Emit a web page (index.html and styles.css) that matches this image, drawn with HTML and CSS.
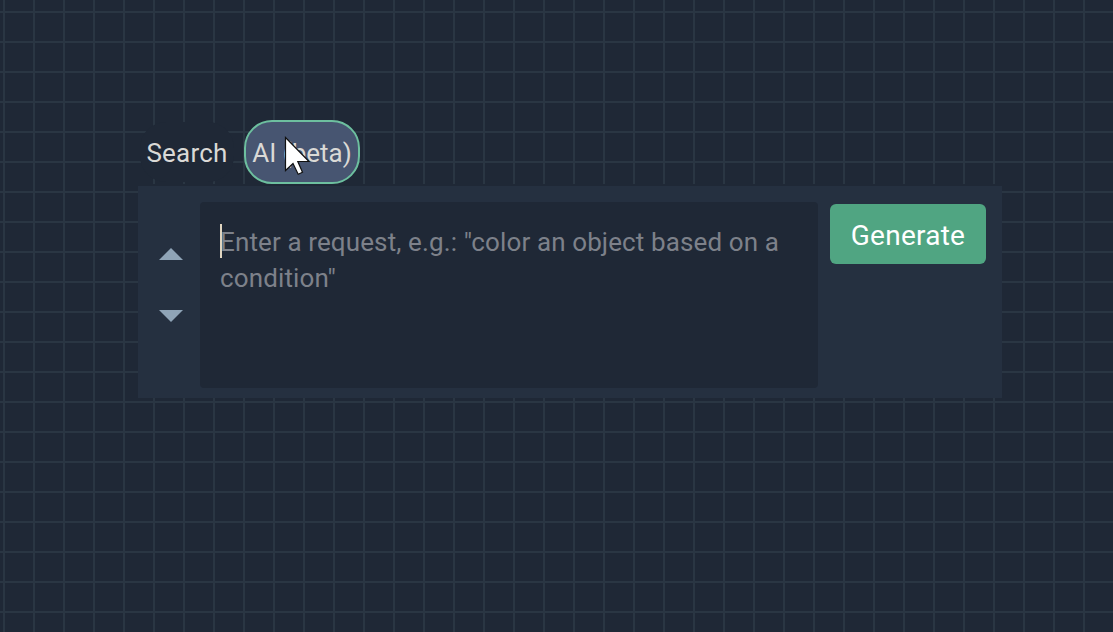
FILE: index.html
```html
<!DOCTYPE html>
<html lang="en">
<head>
<meta charset="utf-8">
<title>Node search</title>
<link rel="stylesheet" href="styles.css">
</head>
<body>
<main class="browser">
  <nav class="tabs">
    <div class="tab">Search</div>
    <div class="tab tab-active">AI (beta)</div>
  </nav>
  <section class="panel">
    <div class="history">
      <svg width="24" height="12" viewBox="0 0 24 12"><path d="M0 12L12 0L24 12Z"/></svg>
      <svg width="24" height="12" viewBox="0 0 24 12"><path d="M0 0L12 12L24 0Z"/></svg>
    </div>
    <div class="prompt"><span class="caret"></span>Enter a request, e.g.: "color an object based on a condition"</div>
    <div class="generate">Generate</div>
  </section>
</main>
<svg class="pointer" width="28" height="40" viewBox="0 0 28 40"><path d="M1.5 1.5V34.5L9 27.5L14.2 38.3L18.5 36.3L13.8 25.5H25Z"/></svg>
</body>
</html>
```
FILE: styles.css
```css
* {
  box-sizing: border-box;
}

body {
  margin: 0;
  width: 1113px;
  height: 632px;
  overflow: hidden;
  background-color: #1f2836;
  background-image:
    linear-gradient(to right, #2a3643 2px, transparent 2px),
    linear-gradient(to bottom, #2a3643 2px, transparent 2px);
  background-size: 30px 30px;
  background-position: 3px 0, 0 11px;
  font-family: Roboto, sans-serif;
  font-size: 26px;
}

.browser {
  width: 864px;
  margin-left: 138px;
  padding-top: 120px;
}

.tabs {
  display: flex;
  gap: 8px;
  height: 64px;
  color: #dad9d6;
}

.tab {
  display: flex;
  align-items: center;
  justify-content: center;
  width: 98px;
  height: 64px;
  border: 2px solid transparent;
  border-radius: 28px;
  background: #1f2836;
  background-clip: padding-box;
  line-height: 30px;
  padding-top: 2px;
  letter-spacing: 0.2px;
  white-space: nowrap;
}

.tab-active {
  width: 116px;
  border-color: #6dbf9f;
  background: #475571;
  letter-spacing: 0;
}

.panel {
  display: flex;
  height: 214px;
  padding: 16px 16px 10px 0;
  border-top: 2px solid #1f2836;
  background: #253040;
}

.history {
  display: flex;
  flex-direction: column;
  align-items: center;
  gap: 50px;
  width: 62px;
  padding: 46px 0 0 4px;
  fill: #8fa4b7;
}

.history svg {
  display: block;
}

.prompt {
  position: relative;
  width: 618px;
  height: 186px;
  padding: 22px 20px;
  border-radius: 4px;
  background: #1f2836;
  color: #7d818a;
  line-height: 36px;
  letter-spacing: 0.12px;
}

.caret {
  position: absolute;
  left: 20px;
  top: 22px;
  width: 2px;
  height: 34px;
  background: #e0d5c0;
}

.generate {
  display: flex;
  align-items: center;
  justify-content: center;
  width: 156px;
  height: 60px;
  margin: 2px 0 0 12px;
  padding-top: 2px;
  border-radius: 6px;
  background: #50a582;
  color: #fff;
  font-size: 28px;
  letter-spacing: 0.25px;
}

.pointer {
  position: absolute;
  left: 284px;
  top: 136px;
  fill: #fff;
  stroke: #111;
  stroke-width: 1.2;
}
```
